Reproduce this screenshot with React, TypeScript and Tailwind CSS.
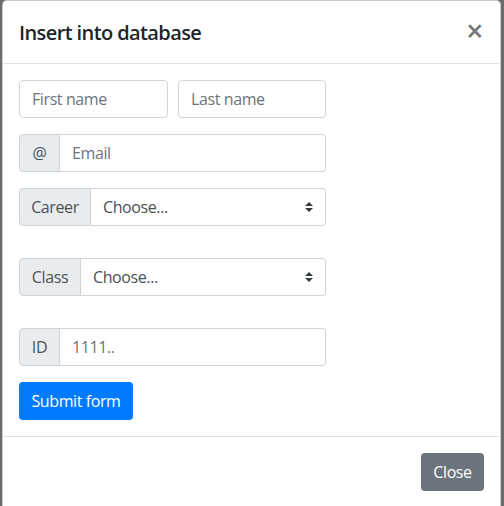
import React from "react";

const font = { fontFamily: '"Open Sans", "Noto Sans", sans-serif' };

function Arrow() {
  return (
    <svg width="8" height="10" viewBox="0 0 4 5" className="absolute right-[12px] top-1/2 -translate-y-1/2">
      <path fill="#343a40" d="M2 0L0 2h4zm0 5L0 3h4z" />
    </svg>
  );
}

function Addon({ children, w }: { children: React.ReactNode; w: string }) {
  return (
    <div
      className={`${w} h-[38px] flex items-center justify-center bg-[#e9ecef] border border-[#ced4da] rounded-l-[4px] text-[16px] text-[#495057]`}
    >
      {children}
    </div>
  );
}

export default function App() {
  return (
    <div className="min-h-[506px] h-[506px] overflow-hidden bg-[#6b6b6b] pl-[2px] tracking-[-0.4px]" style={font}>
      <div className="w-[499px] h-[520px] bg-white border border-[rgba(0,0,0,0.2)] rounded-t-[5px] flex flex-col">
        <div className="h-[63px] flex items-center justify-between px-[16px] border-b border-[#dee2e6]">
          <div className="text-[20px] font-semibold text-[#212529] leading-[30px] tracking-[-0.6px] mt-[2px]">Insert into database</div>
          <div className="text-[30px] font-semibold text-[#777777] leading-none pr-[1px] -mt-[2px]">×</div>
        </div>
        <div className="p-[16px] flex flex-col">
          <div className="flex gap-[10px]">
            <div className="w-[149px] h-[38px] border border-[#ced4da] rounded-[4px] flex items-center px-[12px] text-[16px] text-[#6c757d]">
              First name
            </div>
            <div className="w-[148px] h-[38px] border border-[#ced4da] rounded-[4px] flex items-center px-[12px] text-[16px] text-[#6c757d]">
              Last name
            </div>
          </div>
          <div className="mt-[16px] flex w-[307px]">
            <Addon w="w-[41px]">@</Addon>
            <div className="flex-1 h-[38px] border border-l-0 border-[#ced4da] rounded-r-[4px] flex items-center px-[12px] text-[16px] text-[#6c757d]">
              Email
            </div>
          </div>
          <div className="mt-[16px] flex w-[307px]">
            <Addon w="w-[72px]">Career</Addon>
            <div className="relative flex-1 h-[38px] border border-l-0 border-[#ced4da] rounded-r-[4px] flex items-center px-[12px] text-[16px] text-[#495057]">
              Choose...
              <Arrow />
            </div>
          </div>
          <div className="mt-[32px] flex w-[307px]">
            <Addon w="w-[62px]">Class</Addon>
            <div className="relative flex-1 h-[38px] border border-l-0 border-[#ced4da] rounded-r-[4px] flex items-center px-[12px] text-[16px] text-[#495057]">
              Choose...
              <Arrow />
            </div>
          </div>
          <div className="mt-[32px] flex w-[307px]">
            <Addon w="w-[41px]">ID</Addon>
            <div className="flex-1 h-[38px] border border-l-0 border-[#ced4da] rounded-r-[4px] flex items-center px-[12px] text-[16px] text-[#6c757d]">
              1111..
            </div>
          </div>
          <div className="mt-[16px]">
            <div className="inline-flex items-center justify-center w-[114px] h-[38px] bg-[#007bff] text-white rounded-[4px] text-[16px]">
              Submit form
            </div>
          </div>
        </div>
        <div className="border-t border-[#dee2e6] flex justify-end p-[12px]">
          <div className="m-[4px] inline-flex items-center justify-center w-[63px] h-[38px] bg-[#6c757d] text-white rounded-[4px] text-[16px]">
            Close
          </div>
        </div>
      </div>
    </div>
  );
}
